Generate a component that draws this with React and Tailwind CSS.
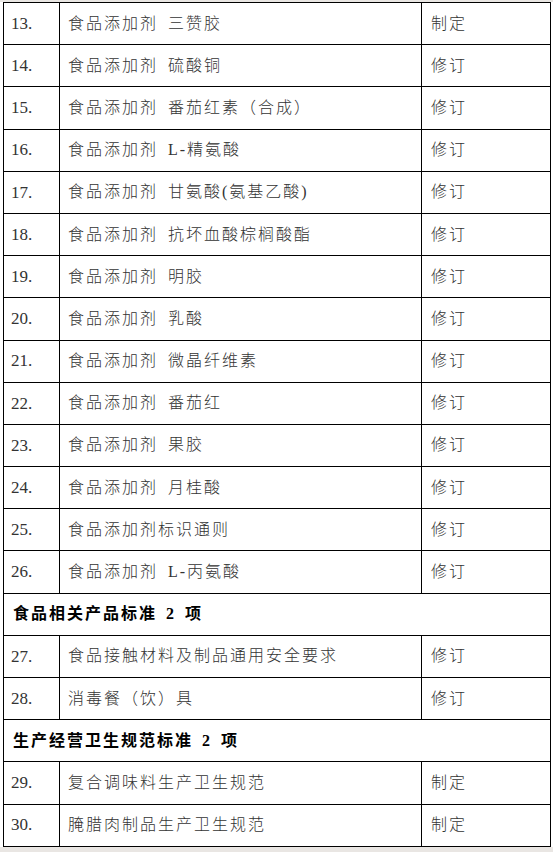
const rows = [
  { t: "item", n: "13.", name: "食品添加剂 三赞胶", s: "制定" },
  { t: "item", n: "14.", name: "食品添加剂 硫酸铜", s: "修订" },
  { t: "item", n: "15.", name: "食品添加剂 番茄红素（合成）", s: "修订" },
  { t: "item", n: "16.", name: "食品添加剂 L-精氨酸", s: "修订" },
  { t: "item", n: "17.", name: "食品添加剂 甘氨酸(氨基乙酸)", s: "修订" },
  { t: "item", n: "18.", name: "食品添加剂 抗坏血酸棕榈酸酯", s: "修订" },
  { t: "item", n: "19.", name: "食品添加剂 明胶", s: "修订" },
  { t: "item", n: "20.", name: "食品添加剂 乳酸", s: "修订" },
  { t: "item", n: "21.", name: "食品添加剂 微晶纤维素", s: "修订" },
  { t: "item", n: "22.", name: "食品添加剂 番茄红", s: "修订" },
  { t: "item", n: "23.", name: "食品添加剂 果胶", s: "修订" },
  { t: "item", n: "24.", name: "食品添加剂 月桂酸", s: "修订" },
  { t: "item", n: "25.", name: "食品添加剂标识通则", s: "修订" },
  { t: "item", n: "26.", name: "食品添加剂 L-丙氨酸", s: "修订" },
  { t: "head", name: "食品相关产品标准 2 项" },
  { t: "item", n: "27.", name: "食品接触材料及制品通用安全要求", s: "修订" },
  { t: "item", n: "28.", name: "消毒餐（饮）具", s: "修订" },
  { t: "head", name: "生产经营卫生规范标准 2 项" },
  { t: "item", n: "29.", name: "复合调味料生产卫生规范", s: "制定" },
  { t: "item", n: "30.", name: "腌腊肉制品生产卫生规范", s: "制定" },
];

export default function App() {
  return (
    <div
      className="h-[852px] w-[553px] overflow-hidden bg-[#e9e6e3] pt-[2px]"
      style={{ fontFamily: '"Liberation Serif", "Noto Sans CJK SC", serif' }}
    >
      <div className="h-[845px] bg-white pl-[3px]">
        <table className="w-[547px] table-fixed border-collapse">
          <colgroup>
            <col className="w-[56px]" />
            <col className="w-[362px]" />
            <col className="w-[129px]" />
          </colgroup>
          <tbody>
            {rows.map((r, i) =>
              r.t === "head" ? (
                <tr key={i} className="h-[42.2px]">
                  <td
                    colSpan={3}
                    className="border border-black pl-[9px] align-middle text-[16px] font-bold tracking-[2px] [word-spacing:3px] text-black"
                  >
                    {r.name}
                  </td>
                </tr>
              ) : (
                <tr key={i} className="h-[42.2px]">
                  <td className="border border-black pl-[7px] align-middle text-[17px] text-[#333]">
                    {r.n}
                  </td>
                  <td className="border border-black pl-[8px] align-middle text-[16px] font-light tracking-[2px] [word-spacing:4px] text-[#333]">
                    {r.name}
                  </td>
                  <td className="border border-black pl-[9px] align-middle text-[16px] font-light tracking-[2px] text-[#333]">
                    {r.s}
                  </td>
                </tr>
              )
            )}
          </tbody>
        </table>
      </div>
    </div>
  );
}
